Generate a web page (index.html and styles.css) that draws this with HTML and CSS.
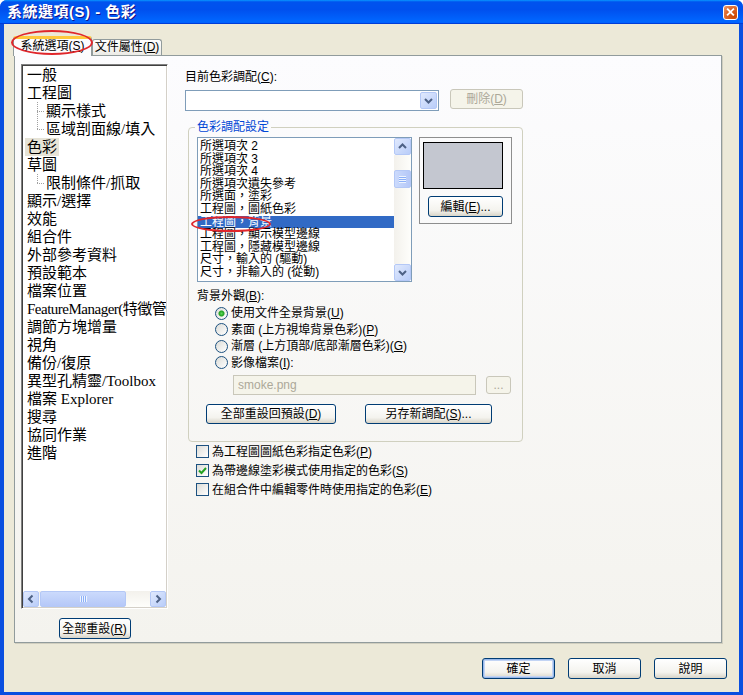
FILE: index.html
```html
<!DOCTYPE html>
<html lang="zh-Hant">
<head>
  <meta charset="UTF-8" />
  <title>系統選項(S) - 色彩</title>
  <link rel="stylesheet" href="styles.css">
</head>
<body>

  <div class="window">
    <div class="titlebar">
      <span class="title">系統選項(S) - 色彩</span>
      <span class="close">
        <svg width="14" height="14" viewBox="0 0 14 14"><path d="M4 4 L10 10 M10 4 L4 10" stroke="#fff" stroke-width="2" stroke-linecap="square"/></svg>
      </span>
    </div>

    <div class="client">
      <div class="tabs">
        <div class="tab active">系統選項(<u>S</u>)</div>
        <div class="tab">文件屬性(<u>D</u>)</div>
      </div>

      <div class="panel">
        <!-- 左邊的樹狀清單 -->
        <div class="side">
          <div class="tree">
            <div class="tree-items">
              <div class="row"><span class="node">一般</span></div>
              <div class="row"><span class="node">工程圖</span></div>
              <div class="row child"><span class="twig full"></span><span class="node">顯示樣式</span></div>
              <div class="row child"><span class="twig"></span><span class="node">區域剖面線/填入</span></div>
              <div class="row"><span class="node selected">色彩</span></div>
              <div class="row"><span class="node">草圖</span></div>
              <div class="row child"><span class="twig"></span><span class="node">限制條件/抓取</span></div>
              <div class="row"><span class="node">顯示/選擇</span></div>
              <div class="row"><span class="node">效能</span></div>
              <div class="row"><span class="node">組合件</span></div>
              <div class="row"><span class="node">外部參考資料</span></div>
              <div class="row"><span class="node">預設範本</span></div>
              <div class="row"><span class="node">檔案位置</span></div>
              <div class="row"><span class="node narrow">FeatureManager(特徵管</span></div>
              <div class="row"><span class="node">調節方塊增量</span></div>
              <div class="row"><span class="node">視角</span></div>
              <div class="row"><span class="node">備份/復原</span></div>
              <div class="row"><span class="node">異型孔精靈/Toolbox</span></div>
              <div class="row"><span class="node">檔案 Explorer</span></div>
              <div class="row"><span class="node">搜尋</span></div>
              <div class="row"><span class="node">協同作業</span></div>
              <div class="row"><span class="node">進階</span></div>
            </div>
            <div class="hscroll">
              <span class="sb-btn"><svg width="14" height="14" viewBox="0 0 14 14"><path d="M8.5 3.5 L5 7 L8.5 10.5" stroke="#4D6185" stroke-width="2" fill="none"/></svg></span>
              <span class="sb-track">
                <span class="sb-thumb h"><span class="grip-h"></span></span>
              </span>
              <span class="sb-btn"><svg width="14" height="14" viewBox="0 0 14 14"><path d="M5.5 3.5 L9 7 L5.5 10.5" stroke="#4D6185" stroke-width="2" fill="none"/></svg></span>
            </div>
          </div>
          <button class="btn reset-all">全部重設(<u>R</u>)</button>
        </div>

        <!-- 右邊：色彩 -->
        <div class="main">
          <div class="label">目前色彩調配(<u>C</u>):</div>
          <div class="combo-row">
            <div class="combo">
              <span class="combo-btn"><svg width="15" height="15" viewBox="0 0 15 15"><path d="M4 6 L7.5 9.5 L11 6" stroke="#4D6185" stroke-width="2" fill="none"/></svg></span>
            </div>
            <button class="btn disabled del">刪除(<u>D</u>)</button>
          </div>

          <fieldset class="group">
            <legend>色彩調配設定</legend>
            <div class="scheme-row">
              <div class="listbox">
                <div class="list-items">
                  <div class="item">所選項次 2</div>
                  <div class="item">所選項次 3</div>
                  <div class="item">所選項次 4</div>
                  <div class="item">所選項次遺失參考</div>
                  <div class="item">所選面，塗彩</div>
                  <div class="item">工程圖，圖紙色彩</div>
                  <div class="item selected">工程圖，背景</div>
                  <div class="item">工程圖，顯示模型邊線</div>
                  <div class="item">工程圖，隱藏模型邊線</div>
                  <div class="item">尺寸，輸入的 (驅動)</div>
                  <div class="item">尺寸，非輸入的 (從動)</div>
                </div>
                <div class="vscroll">
                  <span class="sb-btn"><svg width="15" height="15" viewBox="0 0 15 15"><path d="M4 9 L7.5 5.5 L11 9" stroke="#4D6185" stroke-width="2" fill="none"/></svg></span>
                  <span class="sb-track v">
                    <span class="sb-thumb v"><span class="grip-v"></span></span>
                  </span>
                  <span class="sb-btn"><svg width="15" height="15" viewBox="0 0 15 15"><path d="M4 6 L7.5 9.5 L11 6" stroke="#4D6185" stroke-width="2" fill="none"/></svg></span>
                </div>
              </div>
              <div class="preview">
                <div class="swatch"></div>
                <button class="btn edit">編輯(<u>E</u>)...</button>
              </div>
            </div>

            <div class="label bg-label">背景外觀(<u>B</u>):</div>
            <div class="radios">
              <div class="radio-row"><span class="radio checked"></span><span>使用文件全景背景(<u>U</u>)</span></div>
              <div class="radio-row"><span class="radio"></span><span>素面 (上方視埠背景色彩)(<u>P</u>)</span></div>
              <div class="radio-row"><span class="radio"></span><span>漸層 (上方頂部/底部漸層色彩)(<u>G</u>)</span></div>
              <div class="radio-row"><span class="radio"></span><span>影像檔案(<u>I</u>):</span></div>
            </div>
            <div class="file-row">
              <div class="textbox">smoke.png</div>
              <button class="btn disabled browse">...</button>
            </div>
            <div class="action-row">
              <button class="btn restore">全部重設回預設(<u>D</u>)</button>
              <button class="btn save-as">另存新調配(<u>S</u>)...</button>
            </div>
          </fieldset>

          <div class="checks">
            <div class="check-row"><span class="checkbox"></span><span>為工程圖圖紙色彩指定色彩(<u>P</u>)</span></div>
            <div class="check-row"><span class="checkbox"><svg width="11" height="11" viewBox="0 0 11 11"><path d="M2 5.5 L4.5 8 L9 3" stroke="#21A121" stroke-width="2" fill="none"/></svg></span><span>為帶邊線塗彩模式使用指定的色彩(<u>S</u>)</span></div>
            <div class="check-row"><span class="checkbox"></span><span>在組合件中編輯零件時使用指定的色彩(<u>E</u>)</span></div>
          </div>
        </div>
      </div>

      <div class="footer">
        <button class="btn default">確定</button>
        <button class="btn">取消</button>
        <button class="btn">說明</button>
      </div>
    </div>

    <!-- 紅色圈註 -->
    <span class="mark mark-tab"></span>
    <span class="mark mark-item"></span>
  </div>

</body>
</html>
```

FILE: styles.css
```css
/* 基本 */
* {
  box-sizing: border-box;
}

body {
  margin: 0;
  background: #fff;
}

.window {
  position: relative;
  width: 743px;
  height: 695px;
  display: flex;
  flex-direction: column;
  background: #0A4FE0;
  border-radius: 7px 7px 0 0;
  font: 12px/14px "Liberation Sans", "Noto Sans CJK TC", sans-serif;
  color: #000;
}

/* 標題列 */
.titlebar {
  height: 24px;
  flex: none;
  display: flex;
  align-items: center;
  justify-content: space-between;
  padding: 0 5px 0 7px;
  border-radius: 7px 7px 0 0;
  background: linear-gradient(180deg, #0997ff, #0053ee 8%, #0050ee 40%, #0066ff 88%, #0066ff 93%, #005bff 95%, #003dd7 96%, #003dd7);
}

.title {
  color: #fff;
  font: bold 15px/18px "Liberation Sans", "Noto Sans CJK TC", sans-serif;
  letter-spacing: 0.5px;
  text-shadow: 1px 1px #0F1089;
}

.close {
  width: 15px;
  height: 15px;
  display: flex;
  align-items: center;
  justify-content: center;
  border: 1px solid #fff;
  border-radius: 3px;
  background: radial-gradient(circle at 80% 80%, #CC4600, #DC6527 55%, #EE9A73);
}

/* 視窗內容 */
.client {
  flex: 1;
  margin: 0 4px 3px 4px;
  background: #ECE9D8;
  display: flex;
  flex-direction: column;
}

.tabs {
  display: flex;
  align-items: flex-end;
  height: 19px;
  margin: 12px 0 0 9px;
}

.tab {
  height: 16px;
  width: 70px;
  text-align: center;
  border: 1px solid #919B9C;
  border-bottom: none;
  border-radius: 3px 3px 0 0;
  background: linear-gradient(#FFFFFF, #ECEBE6);
  line-height: 15px;
}

.tab.active {
  position: relative;
  z-index: 1;
  width: 79px;
  height: 20px;
  margin-bottom: -1px;
  border-top: 3px solid #FFC83C;
  background: #FCFCFE;
  line-height: 15px;
}

.panel {
  margin-left: 10px;
  width: 708px;
  height: 588px;
  border: 1px solid #919B9C;
  background: linear-gradient(#FCFCFE, #F4F3EE);
  box-shadow: 1px 1px 0 #D0CEBF;
  display: flex;
}

/* 左欄 */
.side {
  display: flex;
  flex-direction: column;
  align-items: center;
  padding: 8px 0 0 6px;
}

.tree {
  width: 147px;
  height: 545px;
  padding: 1px;
  border: 1px solid;
  border-color: #808080 #FFFFFF #FFFFFF #808080;
  box-shadow: inset 1px 1px #404040, inset -1px -1px #D4D0C8;
  background: #fff;
  display: flex;
  flex-direction: column;
}

.tree-items {
  flex: 1;
  overflow: hidden;
  white-space: nowrap;
  font: 15px/18px "Liberation Serif", "Noto Sans CJK TC", serif;
}

.row {
  height: 18px;
  display: flex;
  padding-left: 2px;
}

.row.child {
  padding-left: 14px;
}

.node {
  padding: 0 2px;
}

.node.narrow {
  letter-spacing: -0.5px;
}

.node.selected {
  background: #E6E3D6;
}

.twig {
  width: 7px;
  height: 18px;
  flex: none;
  background-image:
    repeating-linear-gradient(to bottom, #A0A0A0 0 1px, transparent 1px 2px),
    repeating-linear-gradient(to right, #A0A0A0 0 1px, transparent 1px 2px);
  background-size: 1px 9px, 7px 1px;
  background-position: 0 0, 0 9px;
  background-repeat: no-repeat;
}

.twig.full {
  background-size: 1px 18px, 7px 1px;
}

/* 捲軸 */
.hscroll {
  height: 16px;
  display: flex;
  flex: none;
}

.vscroll {
  width: 17px;
  display: flex;
  flex-direction: column;
  flex: none;
}

.sb-btn {
  width: 16px;
  height: 16px;
  flex: none;
  display: flex;
  align-items: center;
  justify-content: center;
  border: 1px solid #B4C8F6;
  border-radius: 2px;
  background: linear-gradient(135deg, #E0E9FD, #B9CDF9);
}

.vscroll .sb-btn {
  width: 17px;
  height: 17px;
}

.sb-track {
  flex: 1;
  display: flex;
  align-items: stretch;
  padding-left: 1px;
  background: linear-gradient(#F3F1EC, #FEFEFB);
}

.sb-track.v {
  flex-direction: column;
  padding: 15px 0 0 0;
  background: linear-gradient(90deg, #F3F1EC, #FEFEFB);
}

.sb-thumb {
  display: flex;
  align-items: center;
  justify-content: center;
  border: 1px solid #B4C8F6;
  border-radius: 2px;
  background: linear-gradient(#CBDAFC, #B5C8F8);
}

.sb-thumb.h {
  width: 86px;
}

.sb-thumb.v {
  height: 18px;
  background: linear-gradient(90deg, #CBDAFC, #B5C8F8);
}

.grip-h {
  width: 7px;
  height: 6px;
  background: repeating-linear-gradient(90deg, #EEF4FE 0 1px, #8CB0F8 1px 2px);
}

.grip-v {
  width: 7px;
  height: 7px;
  background: repeating-linear-gradient(180deg, #EEF4FE 0 1px, #8CB0F8 1px 2px);
}

/* 按鈕 */
.btn {
  font: inherit;
  color: #000;
  padding: 0;
  height: 21px;
  border: 1px solid #003C74;
  border-radius: 3px;
  background: linear-gradient(#FFFFFF, #F4F3EE 70%, #D8D4C8);
}

.btn.disabled {
  color: #ACA899;
  border-color: #C9C7BA;
  background: #F5F4EA;
}

.btn.default {
  box-shadow: inset 0 0 0 1px #98B8EA, inset 0 0 0 2px #C2D4F4;
}

.reset-all {
  width: 72px;
  margin-top: 9px;
}

/* 右欄 */
.main {
  margin-left: 17px;
  padding-top: 14px;
  display: flex;
  flex-direction: column;
  align-items: flex-start;
}

.label {
  height: 14px;
}

.combo-row {
  display: flex;
  margin-top: 6px;
}

.combo {
  width: 254px;
  height: 21px;
  border: 1px solid #7F9DB9;
  background: #fff;
  display: flex;
  justify-content: flex-end;
  padding: 1px;
}

.combo-btn {
  width: 17px;
  display: flex;
  align-items: center;
  justify-content: center;
  border: 1px solid #B4C8F6;
  border-radius: 2px;
  background: linear-gradient(135deg, #E0E9FD, #B9CDF9);
}

.del {
  width: 73px;
  margin-left: 11px;
  height: 20px;
  margin-top: -1px;
}

.group {
  margin: 9px 0 0 3px;
  width: 335px;
  padding: 3px 10px 17px 8px;
  border: 1px solid #D0D0BF;
  border-radius: 4px;
}

.group legend {
  padding: 0 2px;
  margin-left: -2px;
  color: #0046D5;
  line-height: 14px;
}

.scheme-row {
  display: flex;
  align-items: flex-start;
}

.listbox {
  width: 215px;
  height: 145px;
  border: 1px solid #7F9DB9;
  background: #fff;
  display: flex;
}

.list-items {
  flex: 1;
  overflow: hidden;
  white-space: nowrap;
  padding-top: 2px;
}

.item {
  height: 12.6px;
  line-height: 12.6px;
  padding-left: 2px;
}

.item.selected {
  background: #316AC5;
  color: #fff;
}

.preview {
  width: 93px;
  height: 87px;
  margin-left: 7px;
  border: 1px solid #8E8E8E;
  display: flex;
  flex-direction: column;
  align-items: center;
  padding-top: 4px;
}

.swatch {
  width: 80px;
  height: 47px;
  border: 1px solid #000;
  background: #C4C7D0;
  margin-left: -5px;
}

.edit {
  width: 75px;
  height: 21px;
  margin-top: 7px;
}

.bg-label {
  margin-top: 7px;
}

.radios {
  padding: 2px 0 0 18px;
}

.radio-row {
  height: 16.5px;
  display: flex;
  align-items: center;
  gap: 3px;
}

.radio {
  width: 13px;
  height: 13px;
  flex: none;
  border: 1px solid #1C5180;
  border-radius: 50%;
  background: linear-gradient(135deg, #DCDCD7, #FFFFFF);
}

.radio.checked {
  background:
    radial-gradient(circle, #5CD85A 0, #21A121 2.5px, transparent 3.5px),
    linear-gradient(135deg, #DCDCD7, #FFFFFF);
}

.file-row {
  display: flex;
  margin-top: 4px;
  padding-left: 36px;
}

.textbox {
  width: 243px;
  height: 20px;
  border: 1px solid #C9C7BA;
  background: #F5F4EA;
  color: #ACA899;
  padding: 2px 4px;
}

.browse {
  width: 25px;
  height: 18px;
  margin: 1px 0 0 10px;
  line-height: 10px;
}

.action-row {
  display: flex;
  margin-top: 9px;
  padding-left: 9px;
}

.restore {
  width: 130px;
  height: 20px;
}

.save-as {
  width: 127px;
  height: 20px;
  margin-left: 29px;
}

.checks {
  margin-left: 11px;
}

.check-row {
  height: 19px;
  display: flex;
  align-items: center;
  gap: 3px;
}

.checkbox {
  width: 13px;
  height: 13px;
  flex: none;
  border: 1px solid #1C5180;
  background: linear-gradient(135deg, #DCDCD7, #FFFFFF);
  display: flex;
  align-items: center;
  justify-content: center;
}

/* 下方按鈕 */
.footer {
  display: flex;
  justify-content: flex-end;
  gap: 13px;
  margin-top: 15px;
  padding-right: 12px;
}

.footer .btn {
  width: 73px;
}

/* 紅圈 */
.mark {
  position: absolute;
  z-index: 2;
  border: 2px solid #E0262B;
  border-radius: 50%;
}

.mark-tab {
  left: 11px;
  top: 30px;
  width: 82px;
  height: 25px;
}

.mark-item {
  left: 191px;
  top: 216px;
  width: 80px;
  height: 16px;
}
```
